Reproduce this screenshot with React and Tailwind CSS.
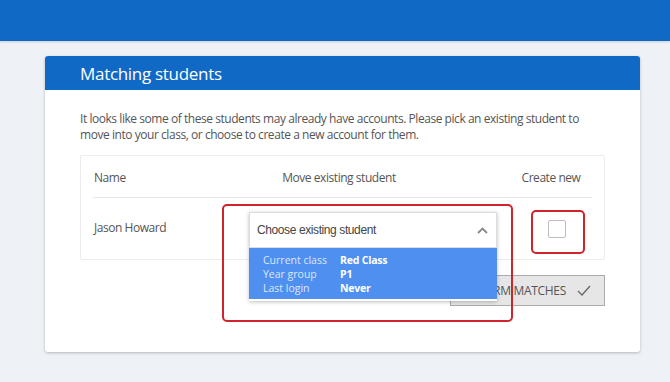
import React from "react";

export default function App() {
  return (
    <div className="w-[670px] h-[382px] bg-[#EEF2F7] overflow-hidden" style={{ fontFamily: '"Open Sans", sans-serif' }}>
      <div className="h-[41px] bg-[#1169C6] shadow-[0_1px_2px_rgba(0,0,0,0.15)]" />
      <div className="ml-[45px] mt-[15px] w-[595px] bg-white rounded-[3px] shadow-[0_1px_3px_rgba(0,0,0,0.25)]">
        <div className="h-[34px] bg-[#1169C6] rounded-t-[3px] pl-[35px] flex items-center">
          <span className="text-white text-[17px] tracking-[-0.3px] leading-none">Matching students</span>
        </div>
        <div className="px-[35px] pt-[21px] pb-[46px]">
          <p className="text-[12px] tracking-[-0.45px] leading-[16px] text-[#555]">
            It looks like some of these students may already have accounts. Please pick an existing student to move into your class, or choose to create a new account for them.
          </p>
          <div className="mt-[12px] border border-[#EDEDED] rounded-[2px] px-[12px]">
            <div className="h-[42px] pt-[3px] flex items-center text-[12px] tracking-[-0.45px] text-[#555] border-b border-[#E8E8E8]">
              <div className="w-[128px] pl-[1px]">Name</div>
              <div className="w-[236px] text-center">Move existing student</div>
              <div className="w-[54px]" />
              <div className="w-[80px] text-center">Create new</div>
            </div>
            <div className="relative h-[61px] flex items-center text-[12px] tracking-[-0.45px] text-[#555]">
              <div className="w-[128px] pl-[1px] pb-[2px]">Jason Howard</div>
              <div className="w-[236px]" />
              <div className="w-[54px]" />
              <div className="w-[80px] pl-[37px]">
                <div className="w-[18px] h-[18px] border border-[#BDBDBD] rounded-[2px] bg-white" />
              </div>

              <div className="absolute left-[156px] top-[14px] w-[248px] bg-white shadow-[0_1px_4px_rgba(0,0,0,0.25)] z-10 tracking-normal">
                <div className="h-[36px] border border-[#DCDCDC] flex items-center justify-between pl-[7px] pr-[8px]" style={{ fontFamily: '"Liberation Sans", Arial, sans-serif' }}>
                  <span className="text-[12px] text-[#444] tracking-[-0.4px]">Choose existing student</span>
                  <svg width="11" height="7" viewBox="0 0 11 7" fill="none" stroke="#888" strokeWidth="1.8"><path d="M1 6 L5.5 1.5 L10 6" /></svg>
                </div>
                <div className="bg-[#4F8FF0] pl-[14px] pt-[5px] pb-[4px] text-[10.5px] leading-[14px] mb-[2px]">
                  <div className="flex"><span className="w-[77px] text-[#DCE8FF]">Current class</span><span className="font-bold text-white tracking-[-0.2px]">Red Class</span></div>
                  <div className="flex"><span className="w-[77px] text-[#DCE8FF]">Year group</span><span className="font-bold text-white tracking-[-0.2px]">P1</span></div>
                  <div className="flex"><span className="w-[77px] text-[#DCE8FF]">Last login</span><span className="font-bold text-white tracking-[-0.2px]">Never</span></div>
                </div>
              </div>

              <div className="absolute left-[129px] top-[6px] w-[291px] h-[118px] border-2 border-[#D2222B] rounded-[5px] z-20 pointer-events-none" />
              <div className="absolute left-[438px] top-[12px] w-[54px] h-[44px] border-2 border-[#D2222B] rounded-[5px] z-20 pointer-events-none" />
            </div>
          </div>
          <div className="mt-[15px] flex justify-end">
            <div className="w-[155px] h-[31px] bg-[#E6E6E6] border border-[#ABABAB] flex items-center justify-end pr-[13px] gap-[11px] text-[12px] tracking-[-0.3px] text-[#555]">
              <span>CONFIRM MATCHES</span>
              <svg width="14" height="11" viewBox="0 0 14 11" fill="none" stroke="#666" strokeWidth="1.3"><path d="M1 6 L5 10 L13 1" /></svg>
            </div>
          </div>
        </div>
      </div>
    </div>
  );
}
